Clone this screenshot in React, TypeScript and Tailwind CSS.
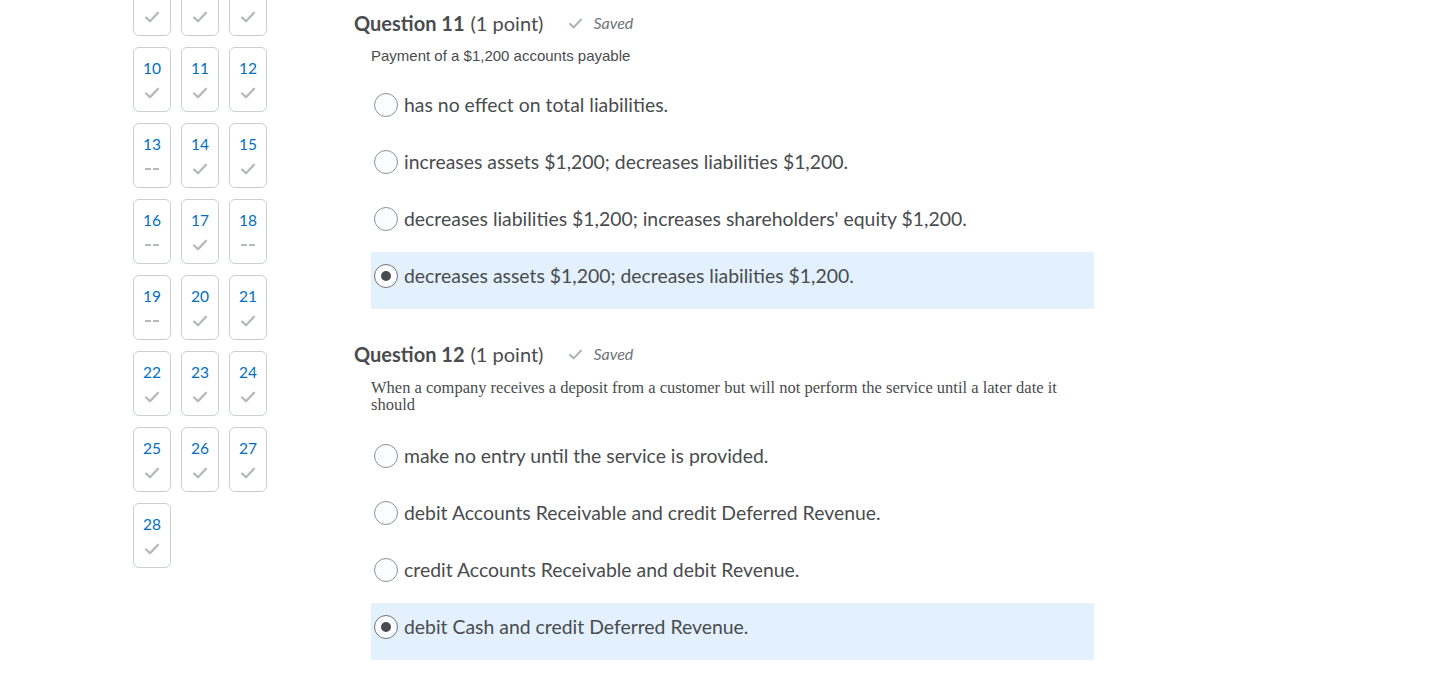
import React from "react";

type Cell = { n: number | null; done: boolean };

// first row is scrolled off the top; only its check marks show
const cells: Cell[] = [
  { n: null, done: true },
  { n: null, done: true },
  { n: null, done: true },
  { n: 10, done: true },
  { n: 11, done: true },
  { n: 12, done: true },
  { n: 13, done: false },
  { n: 14, done: true },
  { n: 15, done: true },
  { n: 16, done: false },
  { n: 17, done: true },
  { n: 18, done: false },
  { n: 19, done: false },
  { n: 20, done: true },
  { n: 21, done: true },
  { n: 22, done: true },
  { n: 23, done: true },
  { n: 24, done: true },
  { n: 25, done: true },
  { n: 26, done: true },
  { n: 27, done: true },
  { n: 28, done: true },
];

function Check({ className, width = 2 }: { className?: string; width?: number }) {
  return (
    <svg viewBox="0 0 16 12" className={className} fill="none">
      <path d="M2 6.5 L6 10.2 L14 1.8" stroke="currentColor" strokeWidth={width} strokeLinecap="round" strokeLinejoin="round" />
    </svg>
  );
}

function NavCell({ cell }: { cell: Cell }) {
  return (
    <div className="w-[38px] h-[65px] border border-[#c8cfd5] rounded-[6px] flex flex-col items-center pt-[10px]">
      <span className="h-[20px] text-[15.5px] leading-[20px] text-[#006fbf]">{cell.n}</span>
      {cell.done ? (
        <Check className="w-[16px] h-[12px] mt-[9px] text-[#b3b9be]" width={2.3} />
      ) : (
        <span className="mt-[14px] flex gap-[2px]">
          <span className="w-[6px] h-[2px] bg-[#b3b9be]" />
          <span className="w-[6px] h-[2px] bg-[#b3b9be]" />
        </span>
      )}
    </div>
  );
}

function Radio({ checked }: { checked: boolean }) {
  return (
    <span
      className={`w-[24px] h-[24px] rounded-full border shrink-0 flex items-center justify-center bg-[#fbfcff] ${
        checked ? "border-[#6f7377]" : "border-[#8d9195]"
      }`}
    >
      {checked && <span className="w-[10px] h-[10px] rounded-full bg-[#494c4e]" />}
    </span>
  );
}

function Choice({ text, checked }: { text: string; checked?: boolean }) {
  return (
    <div className={`h-[57px] pt-[12px] pl-[3px] flex items-start gap-[6px] ${checked ? "bg-[#e3f0fd]" : ""}`}>
      <Radio checked={!!checked} />
      <span className="text-[19.4px] leading-[24px] text-[#494c4e]">{text}</span>
    </div>
  );
}

function Heading({ num }: { num: number }) {
  return (
    <div className="flex items-center h-[28px] text-[#494c4e]">
      <span className="text-[20px] font-bold">Question {num}</span>
      <span className="text-[20px] ml-[6px]">(1 point)</span>
      <Check className="w-[15px] h-[11px] ml-[25px] text-[#a9b0b5]" width={2.2} />
      <span className="ml-[10px] text-[16px] italic text-[#6e7376]">Saved</span>
    </div>
  );
}

export default function App() {
  return (
    <div className="w-[1438px] h-[675px] overflow-hidden bg-white flex" style={{ fontFamily: "Lato, 'Noto Sans', sans-serif" }}>
      <div className="pl-[133px] -mt-[29px]">
        <div className="grid grid-cols-[38px_38px_38px] gap-x-[10px] gap-y-[11px]">
          {cells.map((c, i) => (
            <NavCell key={i} cell={c} />
          ))}
        </div>
      </div>

      <div className="ml-[87px] pt-[9px] w-[740px]">
        <Heading num={11} />
        <div className="pl-[17px]">
          <p className="mt-[9px] text-[15px] leading-[20px] text-[#494c4e]" style={{ fontFamily: "'Liberation Sans', Arial, sans-serif" }}>
            Payment of a $1,200 accounts payable
          </p>
          <div className="mt-[15px] w-[723px]">
            <Choice text="has no effect on total liabilities." />
            <Choice text="increases assets $1,200; decreases liabilities $1,200." />
            <Choice text="decreases liabilities $1,200; increases shareholders' equity $1,200." />
            <Choice text="decreases assets $1,200; decreases liabilities $1,200." checked />
          </div>
        </div>

        <div className="mt-[31px]">
          <Heading num={12} />
        </div>
        <div className="pl-[17px]">
          <p className="mt-[11px] w-[700px] text-[16.5px] leading-[17px] text-[#494c4e]" style={{ fontFamily: "'Liberation Serif', 'Times New Roman', serif" }}>
            When a company receives a deposit from a customer but will not perform the service until a later date it should
          </p>
          <div className="mt-[19px] w-[723px]">
            <Choice text="make no entry until the service is provided." />
            <Choice text="debit Accounts Receivable and credit Deferred Revenue." />
            <Choice text="credit Accounts Receivable and debit Revenue." />
            <Choice text="debit Cash and credit Deferred Revenue." checked />
          </div>
        </div>
      </div>
    </div>
  );
}
